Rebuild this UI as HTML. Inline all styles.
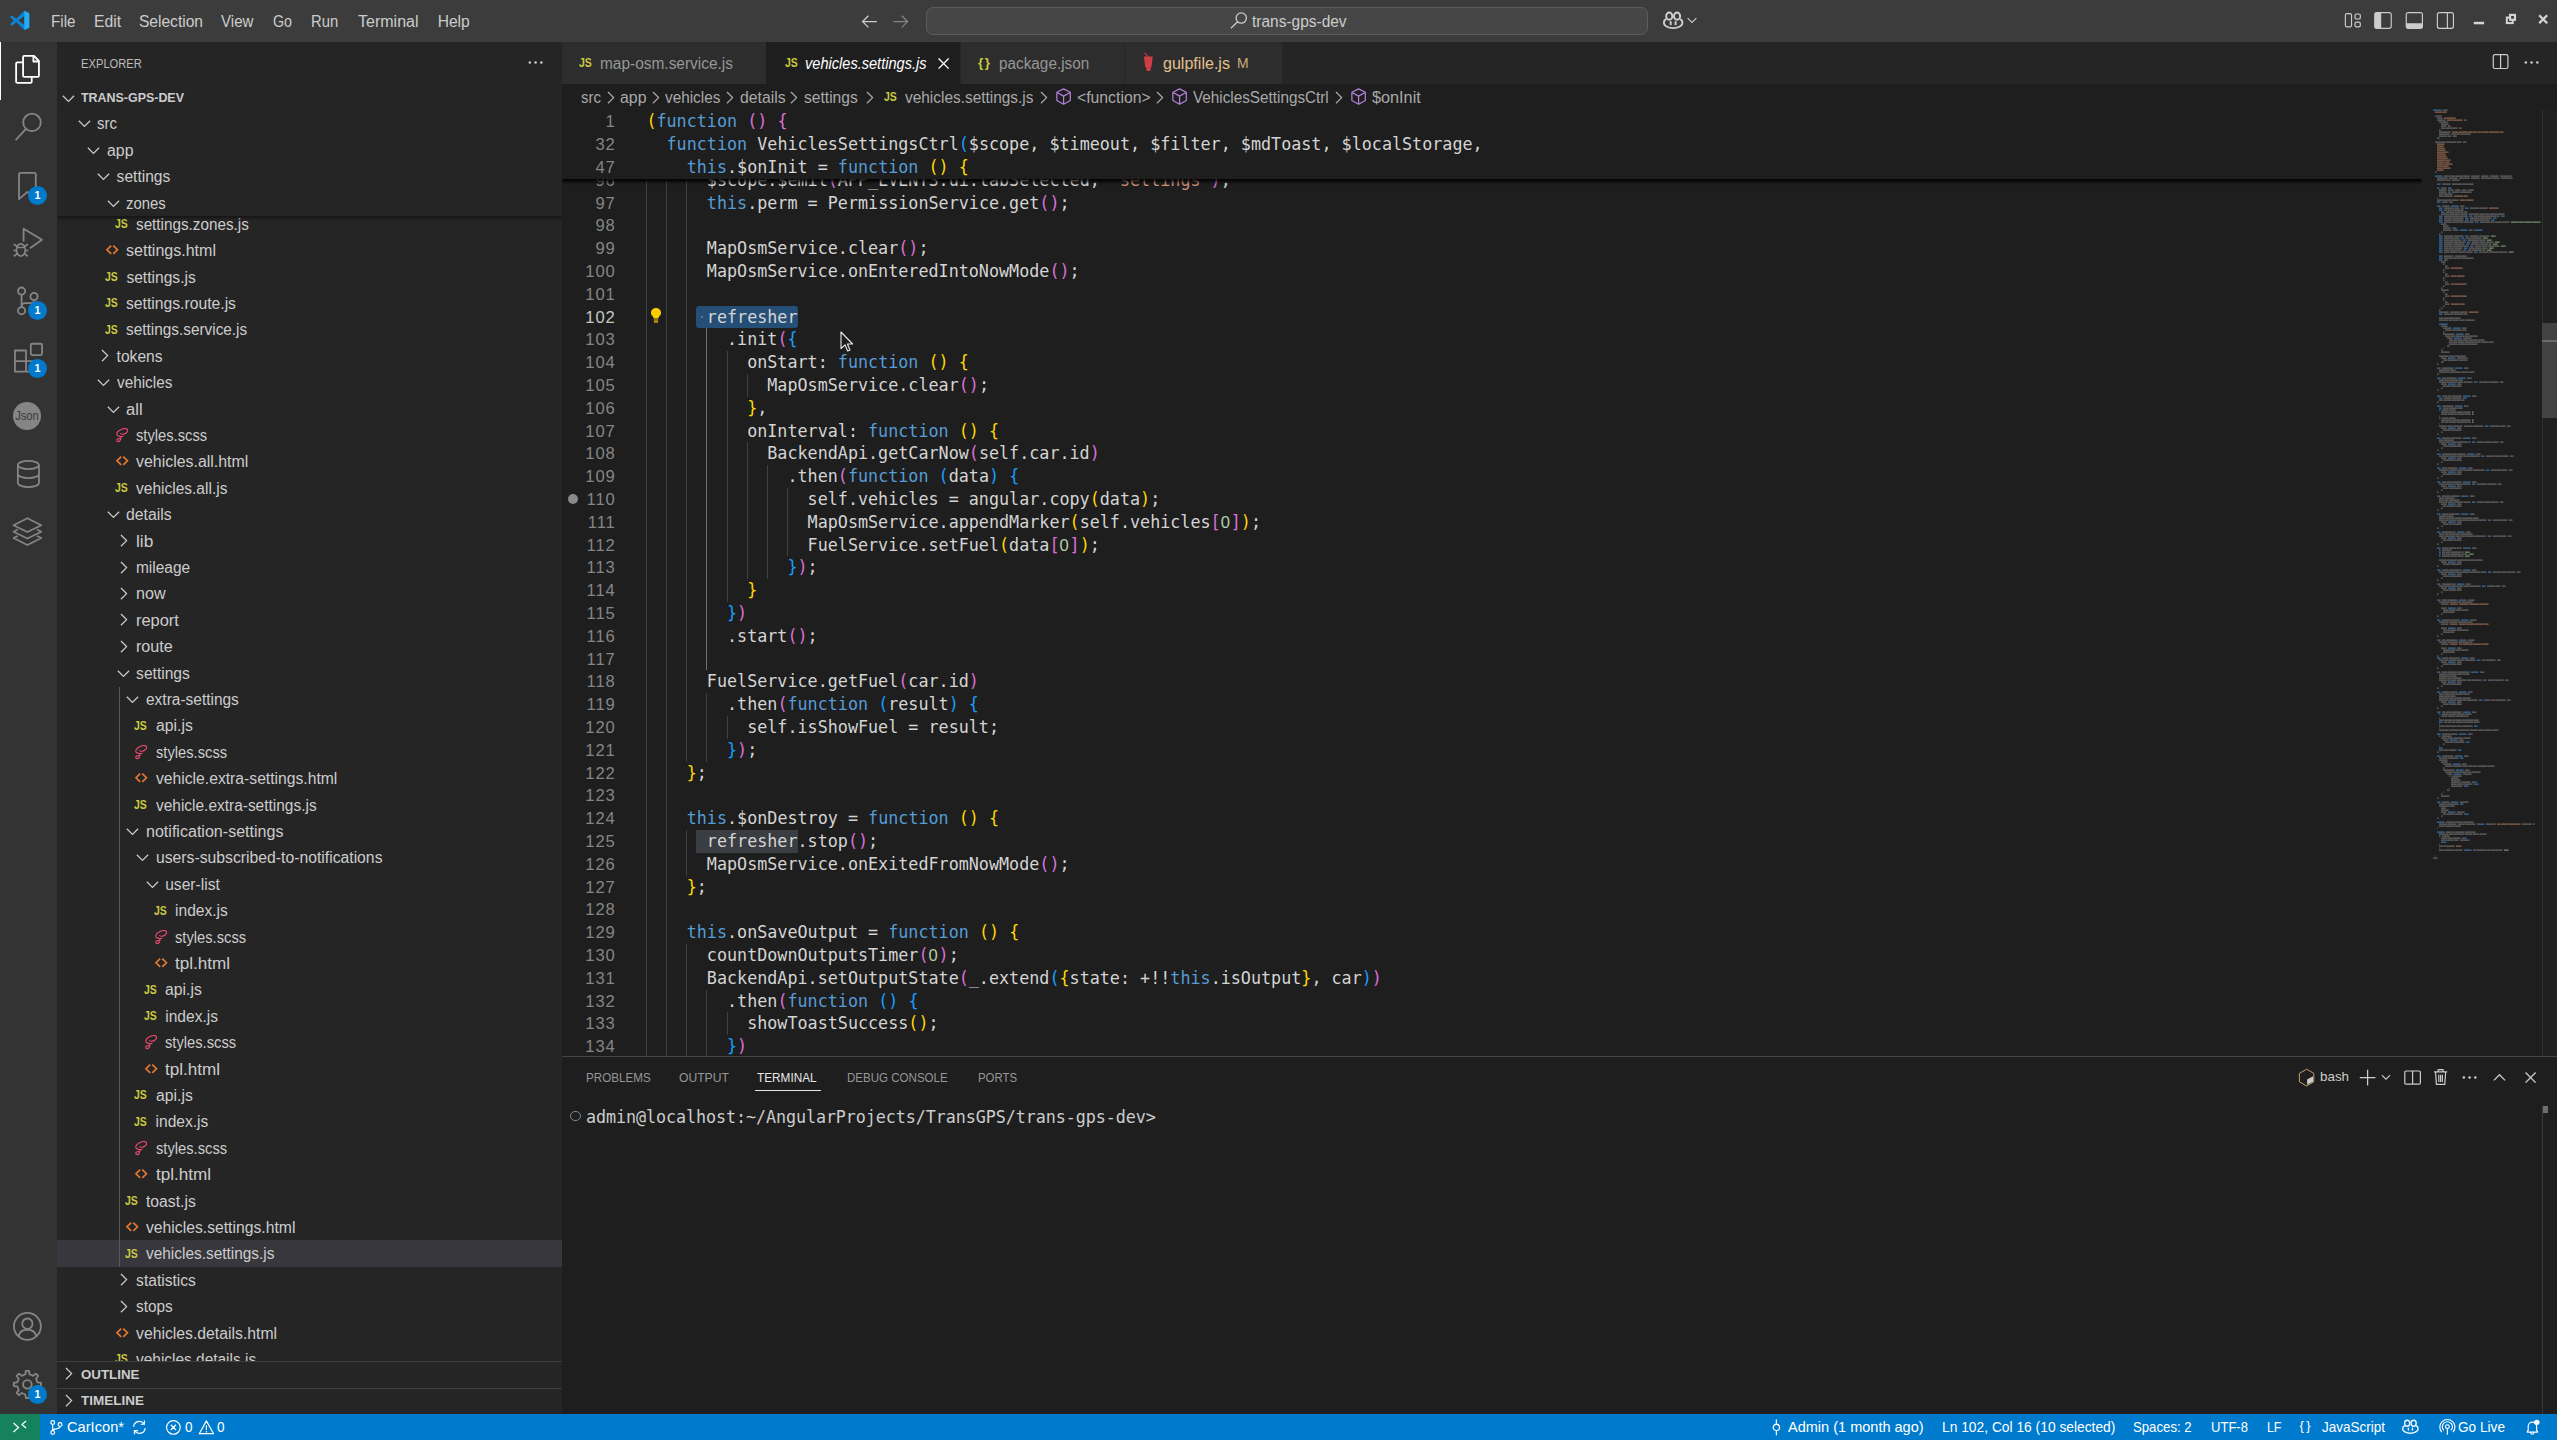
<!DOCTYPE html>
<html lang="en"><head><meta charset="utf-8"><title>vehicles.settings.js - trans-gps-dev - Visual Studio Code</title>
<style>
*{box-sizing:border-box;margin:0;padding:0}
html,body{width:2557px;height:1440px;overflow:hidden;background:#1e1e1e}
body{font-family:"Liberation Sans", "DejaVu Sans", sans-serif;font-size:15.6px;color:#cccccc;position:relative}
.abs{position:absolute}
.t{position:absolute;top:0;white-space:pre;transform-origin:0 50%}
.js{color:#cbcb41;font-size:12.8px;font-weight:bold;transform:scaleX(.82);letter-spacing:-0.2px}
svg{display:block;overflow:visible}
#titlebar{left:0;top:0;width:2557px;height:42px;background:#3c3c3c;line-height:43.6px;color:#cccccc}
#cmd{left:926px;top:7px;width:722px;height:28px;border:1px solid #5c5c5c;border-radius:7px;background:#464646}
#activity{left:0;top:42px;width:57px;height:1372px;background:#333333}
#sidebar{left:57px;top:42px;width:505px;height:1372px;background:#252526;overflow:hidden}
.row{position:absolute;left:0;width:505px;height:26.4px;line-height:28px;white-space:pre;color:#cccccc;font-size:15.6px}
.row svg{position:absolute}
.sel{background:#37373d}
.hdr{color:#cccccc;line-height:26.4px}
#editor{left:562px;top:42px;width:1995px;height:1014px;background:#1e1e1e;overflow:hidden}
#tabs{left:0;top:0;width:1995px;height:42px;background:#252526}
.tab{position:absolute;top:0;height:42px;line-height:43.6px;background:#2d2d2d;color:#969696;font-size:15.6px;white-space:pre}
.tab.active{background:#1e1e1e;color:#ffffff}
#crumbs{left:0;top:42px;width:1995px;height:26.4px;line-height:28px;color:#a9a9a9;font-size:15.6px;white-space:pre}
#crumbs svg{position:absolute}
.code{font-family:"DejaVu Sans Mono", "Liberation Mono", monospace;font-size:16.74px;white-space:pre;color:#d4d4d4}
.ln{position:absolute;left:0;width:1860px;height:22.8px;line-height:23.6px}
.ln .n{position:absolute;left:0;width:53.6px;text-align:right;color:#858585;font-family:"Liberation Sans",sans-serif;font-size:16.6px;letter-spacing:0.85px}
.ln .n.cur{color:#c6c6c6}
.ln .c{position:absolute;left:84.4px}
.k{color:#569cd6}.s{color:#ce9178}.nu{color:#b5cea8;font-family:"Liberation Sans",sans-serif;font-size:16.6px;letter-spacing:0.85px}
.b1{color:#ffd700}.b2{color:#da70d6}.b3{color:#179fff}
.g{position:absolute;width:1px;background:#404040}
.g.a{background:#707070}
#panel{left:562px;top:1056px;width:1995px;height:358px;background:#1e1e1e;border-top:1px solid #454545}
.ptab{position:absolute;top:8px;height:26px;line-height:26px;font-size:13.2px;color:#969696;white-space:pre}
.ptab.active{color:#e7e7e7}
#status{left:0;top:1414px;width:2557px;height:26px;background:#007acc;color:#ffffff;font-size:14.4px;line-height:26.6px;white-space:pre}
#status svg{position:absolute}
.badge{position:absolute;width:19px;height:19px;border-radius:10px;background:#007acc;color:#fff;font-size:10.8px;font-weight:bold;line-height:19px;text-align:center}
</style></head><body>

<div id="titlebar" class="abs">
<svg class="abs" style="left:9px;top:10px" width="21" height="21" viewBox="0 0 23 23" ><path d="M16.850 0.900L8 9.700L3.400 5.900L1 7.700L5.300 11.600L1 15.500L3.400 17.300L8 13.500L16.850 22L22.200 19.400V3.600z" fill="#0a84d6"/><path d="M16.850 0.900L22.200 3.600V19.400L16.850 22z" fill="#25adf3"/><path d="M16.500 6.850L10.300 11.600L16.500 16.100z" fill="#3c3c3c"/></svg>
<span class="t" style="left:50.9px;transform:scaleX(0.972);">File</span>
<span class="t" style="left:93.9px;transform:scaleX(1.010);">Edit</span>
<span class="t" style="left:138.9px;">Selection</span>
<span class="t" style="left:220.9px;transform:scaleX(0.968);">View</span>
<span class="t" style="left:272.7px;transform:scaleX(0.913);">Go</span>
<span class="t" style="left:311.4px;transform:scaleX(0.950);">Run</span>
<span class="t" style="left:357.9px;transform:scaleX(1.027);">Terminal</span>
<span class="t" style="left:437.7px;">Help</span>
<svg class="abs" style="left:860px;top:12px" width="19.2" height="19.2" viewBox="0 0 16 16" ><path d="M14 8H2.6M7 3.2L2.2 8L7 12.8" fill="none" stroke="#cccccc" stroke-width="1.1" /></svg>
<svg class="abs" style="left:891px;top:12px" width="19.2" height="19.2" viewBox="0 0 16 16" ><path d="M2 8H13.4M9 3.2L13.8 8L9 12.8" fill="none" stroke="#848484" stroke-width="1.1" /></svg>
<div id="cmd" class="abs"></div>
<svg class="abs" style="left:1229px;top:11px" width="19.2" height="19.2" viewBox="0 0 16 16" ><path d="M10.2 1.6a4.3 4.3 0 1 1 0 8.6a4.3 4.3 0 0 1 0-8.6zM7.1 9L1.6 14.4" fill="none" stroke="#cccccc" stroke-width="1.05" /></svg>
<span class="t" style="left:1252.0px;transform:scaleX(0.992);">trans-gps-dev</span>
<svg class="abs" style="left:1662.8px;top:11.25px" width="20.3" height="18.1" viewBox="0 0 20.3 18.1" opacity="1"><ellipse cx="6.250" cy="5.150" rx="3.100" ry="3.600" fill="none" stroke="#d0d0d0" stroke-width="1.9"/><ellipse cx="14.050" cy="5.150" rx="3.100" ry="3.600" fill="none" stroke="#d0d0d0" stroke-width="1.9"/><path d="M3.200 8.200C1.600 8.800 0.950 10 0.950 11.600V12.600C0.950 14.200 4.800 17.150 10.150 17.150C15.500 17.150 19.350 14.200 19.350 12.600V11.600C19.350 10 18.700 8.800 17.100 8.200" fill="none" stroke="#d0d0d0" stroke-width="1.9"/><path d="M7.700 11V13.400M12.600 11V13.400" stroke="#d0d0d0" stroke-width="1.9" stroke-linecap="round"/></svg>
<svg class="abs" style="left:1685.9px;top:14.2px" width="12" height="12" viewBox="0 0 16 16" ><path d="M2.2 5.4L8 11.2L13.8 5.4" fill="none" stroke="#cccccc" stroke-width="1.45" /></svg>
<svg class="abs" style="left:0;top:0" width="2557" height="42" viewBox="0 0 2557 42"><rect x="2345.38" y="13.57" width="6.15" height="13.25" rx="1.6" fill="none" stroke="#cccccc" stroke-width="1.15"/><rect x="2354.97" y="13.97" width="5.35" height="5.05" rx="1.6" fill="none" stroke="#cccccc" stroke-width="1.15"/><rect x="2354.97" y="22.18" width="5.35" height="4.65" rx="1.6" fill="none" stroke="#cccccc" stroke-width="1.15"/><rect x="2374.77" y="12.57" width="16.45" height="15.75" rx="2" fill="none" stroke="#cccccc" stroke-width="1.15"/><path d="M2376.200 12.600H2381.200V28.300H2376.200a1.400 1.400 0 0 1-1.400-1.400V14a1.400 1.400 0 0 1 1.400-1.400z" fill="#cccccc"/><rect x="2406.27" y="12.57" width="16.15" height="15.75" rx="2" fill="none" stroke="#cccccc" stroke-width="1.15"/><path d="M2406.300 23.200H2422.400V26.900a1.400 1.400 0 0 1-1.400 1.400H2407.700a1.400 1.400 0 0 1-1.400-1.400z" fill="#cccccc"/><rect x="2437.38" y="12.57" width="16.05" height="15.75" rx="2" fill="none" stroke="#cccccc" stroke-width="1.15"/><path d="M2447.400 12.600V28.300" stroke="#cccccc" stroke-width="1.15"/><rect x="2473.800" y="21.800" width="10.300" height="2.500" fill="#d4d4d4"/><rect x="2506.800" y="17.500" width="5.900" height="5.600" fill="none" stroke="#d4d4d4" stroke-width="2"/><rect x="2510.100" y="14.900" width="4.900" height="4.900" fill="#3c3c3c" stroke="#d4d4d4" stroke-width="2.100"/><path d="M2539.200 15.300L2547.200 23.300M2547.200 15.300L2539.200 23.300" stroke="#d4d4d4" stroke-width="2.300" fill="none"/></svg>
</div>
<div id="activity" class="abs">
<div class="abs" style="left:0;top:0;width:1.4px;height:57.6px;background:#ffffff"></div>
<svg class="abs" style="left:13px;top:13px" width="28.8" height="28.8" viewBox="0 0 24 24" ><path d="M17.500 0.800L21.600 5V17.200a1 1 0 0 1-1 1H9.400a1 1 0 0 1-1-1V1.800a1 1 0 0 1 1-1zM17 1V5.400H21.400M8.400 6.200H3.600a1 1 0 0 0-1 1V22.200a1 1 0 0 0 1 1H14.600a1 1 0 0 0 1-1V18.200" fill="none" stroke="#ffffff" stroke-width="1.5" stroke-linejoin="round"/></svg>
<svg class="abs" style="left:13.5px;top:70px" width="28.8" height="28.8" viewBox="0 0 24 24" ><path d="M15 1.400a7.300 7.300 0 1 1 0 14.600a7.300 7.300 0 0 1 0-14.600zM10 14L1.400 23.400" fill="none" stroke="#858585" stroke-width="1.5" /></svg>
<svg class="abs" style="left:13px;top:129px" width="28.8" height="28.8" viewBox="0 0 24 24" ><path d="M6.200 1.600h11.600a1.200 1.200 0 0 1 1.200 1.200V23.400L12 17.400L5 23.400V2.800a1.200 1.200 0 0 1 1.200-1.200z" fill="none" stroke="#858585" stroke-width="1.5" stroke-linejoin="round"/></svg>
<svg class="abs" style="left:13.5px;top:187.4px" width="28.8" height="28.8" viewBox="0 0 24 24" ><path d="M8 10.400V-0.200L23.300 9L13.300 16" fill="none" stroke="#858585" stroke-width="1.5" stroke-linejoin="round"/><path d="M5.700 12.400a3.700 5.100 0 0 1 0 10.200a3.700 5.100 0 0 1 0-10.200zM2.200 15.400H9.200M2.300 14.400L-0.200 12.600M2 17.900H-0.600M2.500 20.700L-0.200 22.700M9.100 14.400L11.600 12.600M9.400 17.900H12M8.900 20.700L11.600 22.700" fill="none" stroke="#858585" stroke-width="1.4" /></svg>
<svg class="abs" style="left:14px;top:244.8px" width="28.8" height="28.8" viewBox="0 0 24 24" ><path d="M6.300 0.400a3 3 0 1 1 0 6a3 3 0 0 1 0-6zM6.300 16.700a3 3 0 1 1 0 6a3 3 0 0 1 0-6zM16.700 4.900a3 3 0 1 1 0 6a3 3 0 0 1 0-6zM6.300 6.400V16.700M16.700 10.900V11.400Q16.700 13.400 14.700 13.400H9.300Q6.300 13.400 6.300 16.400" fill="none" stroke="#858585" stroke-width="1.5" /></svg>
<svg class="abs" style="left:13.5px;top:302px" width="28.8" height="28.8" viewBox="0 0 24 24" ><path d="M0.800 5.400h9.200v8.800h9.200v8.800H0.800zM0.800 14.200h9.200M10 14.200v8.800" fill="none" stroke="#858585" stroke-width="1.5" stroke-linejoin="round"/><rect x="14" y="-0.2" width="9.400" height="9.400" rx="1.2" fill="none" stroke="#858585" stroke-width="1.5"/></svg>
<div class="abs" style="left:12.8px;top:359.8px;width:28px;height:28px;border-radius:14px;background:#858585"></div><div class="abs" style="left:12.8px;top:359.8px;width:28px;height:28px;line-height:28px;text-align:center;font-size:13px;color:#3a3a3a;transform:scaleX(.86)">Json</div>
<svg class="abs" style="left:14px;top:416.6px" width="28.8" height="28.8" viewBox="0 0 24 24" ><path d="M3.200 5a8.800 3.400 0 0 1 17.600 0a8.800 3.400 0 0 1-17.600 0zM3.200 5V20a8.800 3.400 0 0 0 17.600 0V5M3.200 12.500a8.800 3.400 0 0 0 17.600 0" fill="none" stroke="#858585" stroke-width="1.5" /></svg>
<svg class="abs" style="left:13px;top:474.6px" width="28.8" height="28.8" viewBox="0 0 24 24" ><path d="M12 1L23.600 6.800L12 12.600L0.400 6.800zM4 10.400L0.400 12.200L12 18L23.600 12.200L20 10.400M4 15.800L0.400 17.600L12 23.400L23.600 17.600L20 15.800" fill="none" stroke="#858585" stroke-width="1.4" stroke-linejoin="round"/></svg>
<svg class="abs" style="left:13.2px;top:1270.4px" width="28.8" height="28.8" viewBox="0 0 24 24" ><path d="M12 0.800a11.200 11.200 0 1 1 0 22.400a11.200 11.200 0 0 1 0-22.400zM12 5.400a4.300 4.300 0 1 1 0 8.600a4.300 4.300 0 0 1 0-8.600zM4.600 20.400C5.400 16.400 8.600 14.800 12 14.800s6.600 1.600 7.400 5.600" fill="none" stroke="#858585" stroke-width="1.5" /></svg>
<svg class="abs" style="left:13.2px;top:1327.8px" width="28.8" height="28.8" viewBox="0 0 24 24" ><path d="M10.29 3.57L10.64 0.68L13.36 0.68L13.71 3.57L16.75 4.83L19.04 3.03L20.97 4.96L19.17 7.25L20.43 10.29L23.32 10.64L23.32 13.36L20.43 13.71L19.17 16.75L20.97 19.04L19.04 20.97L16.75 19.17L13.71 20.43L13.36 23.32L10.64 23.32L10.29 20.43L7.25 19.17L4.96 20.97L3.03 19.04L4.83 16.75L3.57 13.71L0.68 13.36L0.68 10.64L3.57 10.29L4.83 7.25L3.03 4.96L4.96 3.03L7.25 4.83z" fill="none" stroke="#858585" stroke-width="1.5" stroke-linejoin="round"/><path d="M12 8.400a3.600 3.600 0 1 1 0 7.200a3.600 3.600 0 0 1 0-7.200z" fill="none" stroke="#858585" stroke-width="1.5" /></svg>
<div class="badge" style="left:28px;top:144px">1</div>
<div class="badge" style="left:28px;top:259px">1</div>
<div class="badge" style="left:28px;top:317px">1</div>
<div class="badge" style="left:28px;top:1342.8px">1</div>
</div>
<div id="sidebar" class="abs">
<div class="abs" style="left:0;top:174px;width:505px;height:1145px;overflow:hidden">
<div class="row" style="top:-5.2px"><span class="t js" style="left:57.9px;top:-0.6px">JS</span><span class="t" style="left:79.1px;transform:scaleX(0.979);">settings.zones.js</span></div>
<div class="row" style="top:21.2px"><svg class="abs" style="left:49.16000000000001px;top:7.95px" width="13" height="10" viewBox="0 0 13 10" ><path d="M5.200 0.700L1 4.750L5.200 8.800M7.250 0.700L11.450 4.750L7.250 8.800" fill="none" stroke="#e37933" stroke-width="1.7" /></svg><span class="t" style="left:69.4px;transform:scaleX(1.028);">settings.html</span></div>
<div class="row" style="top:47.6px"><span class="t js" style="left:48.2px;top:-0.6px">JS</span><span class="t" style="left:69.4px;">settings.js</span></div>
<div class="row" style="top:74.0px"><span class="t js" style="left:48.2px;top:-0.6px">JS</span><span class="t" style="left:69.4px;transform:scaleX(1.007);">settings.route.js</span></div>
<div class="row" style="top:100.4px"><span class="t js" style="left:48.2px;top:-0.6px">JS</span><span class="t" style="left:69.4px;transform:scaleX(0.985);">settings.service.js</span></div>
<div class="row" style="top:126.8px"><svg class="abs" style="left:37.839999999999996px;top:3.7px" width="19.2" height="19.2" viewBox="0 0 16 16" ><path d="M5.8 3.3L10.5 8L5.8 12.7" fill="none" stroke="#cccccc" stroke-width="1.05" /></svg><span class="t" style="left:59.6px;">tokens</span></div>
<div class="row" style="top:153.2px"><svg class="abs" style="left:37.14px;top:4.0px" width="19.2" height="19.2" viewBox="0 0 16 16" ><path d="M3.2 5.6L7.9 10.3L12.6 5.6" fill="none" stroke="#cccccc" stroke-width="1.05" /></svg><span class="t" style="left:59.6px;transform:scaleX(0.982);">vehicles</span></div>
<div class="row" style="top:179.6px"><svg class="abs" style="left:46.860000000000014px;top:4.0px" width="19.2" height="19.2" viewBox="0 0 16 16" ><path d="M3.2 5.6L7.9 10.3L12.6 5.6" fill="none" stroke="#cccccc" stroke-width="1.05" /></svg><span class="t" style="left:69.4px;transform:scaleX(1.063);">all</span></div>
<div class="row" style="top:206.0px"><svg class="abs" style="left:58.98000000000001px;top:6.1px" width="13" height="14" viewBox="0 0 13 14" ><path d="M4.600 5.600C6.500 7 11 5.800 11.600 2.800C12 0.600 8.600-0.200 5.600 1.200C2.600 2.600 0.200 5 1 7C1.600 8.400 3.600 8.200 4.800 8.600L7 8.300M4.800 8.600C5.400 9.600 5 11.400 4 12.600C3 13.900 1.200 14 0.800 12.600C0.400 11.200 2.200 10.200 4 10.800" fill="none" stroke="#ec4a73" stroke-width="1.15" stroke-linecap="round" stroke-linejoin="round"/></svg><span class="t" style="left:79.1px;transform:scaleX(0.943);">styles.scss</span></div>
<div class="row" style="top:232.4px"><svg class="abs" style="left:58.88000000000001px;top:7.95px" width="13" height="10" viewBox="0 0 13 10" ><path d="M5.200 0.700L1 4.750L5.200 8.800M7.250 0.700L11.450 4.750L7.250 8.800" fill="none" stroke="#e37933" stroke-width="1.7" /></svg><span class="t" style="left:79.1px;transform:scaleX(1.020);">vehicles.all.html</span></div>
<div class="row" style="top:258.8px"><span class="t js" style="left:57.9px;top:-0.6px">JS</span><span class="t" style="left:79.1px;transform:scaleX(0.995);">vehicles.all.js</span></div>
<div class="row" style="top:285.2px"><svg class="abs" style="left:46.860000000000014px;top:4.0px" width="19.2" height="19.2" viewBox="0 0 16 16" ><path d="M3.2 5.6L7.9 10.3L12.6 5.6" fill="none" stroke="#cccccc" stroke-width="1.05" /></svg><span class="t" style="left:69.4px;transform:scaleX(1.011);">details</span></div>
<div class="row" style="top:311.6px"><svg class="abs" style="left:57.28000000000001px;top:3.7px" width="19.2" height="19.2" viewBox="0 0 16 16" ><path d="M5.8 3.3L10.5 8L5.8 12.7" fill="none" stroke="#cccccc" stroke-width="1.05" /></svg><span class="t" style="left:79.1px;transform:scaleX(1.107);">lib</span></div>
<div class="row" style="top:338.0px"><svg class="abs" style="left:57.28000000000001px;top:3.7px" width="19.2" height="19.2" viewBox="0 0 16 16" ><path d="M5.8 3.3L10.5 8L5.8 12.7" fill="none" stroke="#cccccc" stroke-width="1.05" /></svg><span class="t" style="left:79.1px;transform:scaleX(0.991);">mileage</span></div>
<div class="row" style="top:364.4px"><svg class="abs" style="left:57.28000000000001px;top:3.7px" width="19.2" height="19.2" viewBox="0 0 16 16" ><path d="M5.8 3.3L10.5 8L5.8 12.7" fill="none" stroke="#cccccc" stroke-width="1.05" /></svg><span class="t" style="left:79.1px;transform:scaleX(1.033);">now</span></div>
<div class="row" style="top:390.8px"><svg class="abs" style="left:57.28000000000001px;top:3.7px" width="19.2" height="19.2" viewBox="0 0 16 16" ><path d="M5.8 3.3L10.5 8L5.8 12.7" fill="none" stroke="#cccccc" stroke-width="1.05" /></svg><span class="t" style="left:79.1px;transform:scaleX(1.052);">report</span></div>
<div class="row" style="top:417.2px"><svg class="abs" style="left:57.28000000000001px;top:3.7px" width="19.2" height="19.2" viewBox="0 0 16 16" ><path d="M5.8 3.3L10.5 8L5.8 12.7" fill="none" stroke="#cccccc" stroke-width="1.05" /></svg><span class="t" style="left:79.1px;transform:scaleX(1.034);">route</span></div>
<div class="row" style="top:443.6px"><svg class="abs" style="left:56.58000000000001px;top:4.0px" width="19.2" height="19.2" viewBox="0 0 16 16" ><path d="M3.2 5.6L7.9 10.3L12.6 5.6" fill="none" stroke="#cccccc" stroke-width="1.05" /></svg><span class="t" style="left:79.1px;">settings</span></div>
<div class="row" style="top:470.0px"><svg class="abs" style="left:66.30000000000001px;top:4.0px" width="19.2" height="19.2" viewBox="0 0 16 16" ><path d="M3.2 5.6L7.9 10.3L12.6 5.6" fill="none" stroke="#cccccc" stroke-width="1.05" /></svg><span class="t" style="left:88.8px;transform:scaleX(0.992);">extra-settings</span></div>
<div class="row" style="top:496.4px"><span class="t js" style="left:77.3px;top:-0.6px">JS</span><span class="t" style="left:98.5px;transform:scaleX(1.011);">api.js</span></div>
<div class="row" style="top:522.8px"><svg class="abs" style="left:78.42000000000002px;top:6.1px" width="13" height="14" viewBox="0 0 13 14" ><path d="M4.600 5.600C6.500 7 11 5.800 11.600 2.800C12 0.600 8.600-0.200 5.600 1.200C2.600 2.600 0.200 5 1 7C1.600 8.400 3.600 8.200 4.800 8.600L7 8.300M4.800 8.600C5.400 9.600 5 11.400 4 12.600C3 13.900 1.200 14 0.800 12.600C0.400 11.200 2.200 10.200 4 10.800" fill="none" stroke="#ec4a73" stroke-width="1.15" stroke-linecap="round" stroke-linejoin="round"/></svg><span class="t" style="left:98.5px;transform:scaleX(0.943);">styles.scss</span></div>
<div class="row" style="top:549.2px"><svg class="abs" style="left:78.32000000000001px;top:7.95px" width="13" height="10" viewBox="0 0 13 10" ><path d="M5.200 0.700L1 4.750L5.200 8.800M7.250 0.700L11.450 4.750L7.250 8.800" fill="none" stroke="#e37933" stroke-width="1.7" /></svg><span class="t" style="left:98.5px;transform:scaleX(1.006);">vehicle.extra-settings.html</span></div>
<div class="row" style="top:575.6px"><span class="t js" style="left:77.3px;top:-0.6px">JS</span><span class="t" style="left:98.5px;transform:scaleX(0.991);">vehicle.extra-settings.js</span></div>
<div class="row" style="top:602.0px"><svg class="abs" style="left:66.30000000000001px;top:4.0px" width="19.2" height="19.2" viewBox="0 0 16 16" ><path d="M3.2 5.6L7.9 10.3L12.6 5.6" fill="none" stroke="#cccccc" stroke-width="1.05" /></svg><span class="t" style="left:88.8px;transform:scaleX(1.030);">notification-settings</span></div>
<div class="row" style="top:628.4px"><svg class="abs" style="left:76.02000000000001px;top:4.0px" width="19.2" height="19.2" viewBox="0 0 16 16" ><path d="M3.2 5.6L7.9 10.3L12.6 5.6" fill="none" stroke="#cccccc" stroke-width="1.05" /></svg><span class="t" style="left:98.5px;transform:scaleX(1.009);">users-subscribed-to-notifications</span></div>
<div class="row" style="top:654.8px"><svg class="abs" style="left:85.74000000000001px;top:4.0px" width="19.2" height="19.2" viewBox="0 0 16 16" ><path d="M3.2 5.6L7.9 10.3L12.6 5.6" fill="none" stroke="#cccccc" stroke-width="1.05" /></svg><span class="t" style="left:108.2px;">user-list</span></div>
<div class="row" style="top:681.2px"><span class="t js" style="left:96.8px;top:-0.6px">JS</span><span class="t" style="left:118.0px;">index.js</span></div>
<div class="row" style="top:707.6px"><svg class="abs" style="left:97.86000000000001px;top:6.1px" width="13" height="14" viewBox="0 0 13 14" ><path d="M4.600 5.600C6.500 7 11 5.800 11.600 2.800C12 0.600 8.600-0.200 5.600 1.200C2.600 2.600 0.200 5 1 7C1.600 8.400 3.600 8.200 4.800 8.600L7 8.300M4.800 8.600C5.400 9.600 5 11.400 4 12.600C3 13.900 1.200 14 0.800 12.600C0.400 11.200 2.200 10.200 4 10.800" fill="none" stroke="#ec4a73" stroke-width="1.15" stroke-linecap="round" stroke-linejoin="round"/></svg><span class="t" style="left:118.0px;transform:scaleX(0.943);">styles.scss</span></div>
<div class="row" style="top:734.0px"><svg class="abs" style="left:97.76px;top:7.95px" width="13" height="10" viewBox="0 0 13 10" ><path d="M5.200 0.700L1 4.750L5.200 8.800M7.250 0.700L11.450 4.750L7.250 8.800" fill="none" stroke="#e37933" stroke-width="1.7" /></svg><span class="t" style="left:118.0px;transform:scaleX(1.096);">tpl.html</span></div>
<div class="row" style="top:760.4px"><span class="t js" style="left:87.0px;top:-0.6px">JS</span><span class="t" style="left:108.2px;transform:scaleX(1.011);">api.js</span></div>
<div class="row" style="top:786.8px"><span class="t js" style="left:87.0px;top:-0.6px">JS</span><span class="t" style="left:108.2px;">index.js</span></div>
<div class="row" style="top:813.2px"><svg class="abs" style="left:88.14000000000001px;top:6.1px" width="13" height="14" viewBox="0 0 13 14" ><path d="M4.600 5.600C6.500 7 11 5.800 11.600 2.800C12 0.600 8.600-0.200 5.600 1.200C2.600 2.600 0.200 5 1 7C1.600 8.400 3.600 8.200 4.800 8.600L7 8.300M4.800 8.600C5.400 9.600 5 11.400 4 12.600C3 13.900 1.200 14 0.800 12.600C0.400 11.200 2.200 10.200 4 10.800" fill="none" stroke="#ec4a73" stroke-width="1.15" stroke-linecap="round" stroke-linejoin="round"/></svg><span class="t" style="left:108.2px;transform:scaleX(0.943);">styles.scss</span></div>
<div class="row" style="top:839.6px"><svg class="abs" style="left:88.04px;top:7.95px" width="13" height="10" viewBox="0 0 13 10" ><path d="M5.200 0.700L1 4.750L5.200 8.800M7.250 0.700L11.450 4.750L7.250 8.800" fill="none" stroke="#e37933" stroke-width="1.7" /></svg><span class="t" style="left:108.2px;transform:scaleX(1.096);">tpl.html</span></div>
<div class="row" style="top:866.0px"><span class="t js" style="left:77.3px;top:-0.6px">JS</span><span class="t" style="left:98.5px;transform:scaleX(1.011);">api.js</span></div>
<div class="row" style="top:892.4px"><span class="t js" style="left:77.3px;top:-0.6px">JS</span><span class="t" style="left:98.5px;">index.js</span></div>
<div class="row" style="top:918.8px"><svg class="abs" style="left:78.42000000000002px;top:6.1px" width="13" height="14" viewBox="0 0 13 14" ><path d="M4.600 5.600C6.500 7 11 5.800 11.600 2.800C12 0.600 8.600-0.200 5.600 1.200C2.600 2.600 0.200 5 1 7C1.600 8.400 3.600 8.200 4.800 8.600L7 8.300M4.800 8.600C5.400 9.600 5 11.400 4 12.600C3 13.900 1.200 14 0.800 12.600C0.400 11.200 2.200 10.200 4 10.800" fill="none" stroke="#ec4a73" stroke-width="1.15" stroke-linecap="round" stroke-linejoin="round"/></svg><span class="t" style="left:98.5px;transform:scaleX(0.943);">styles.scss</span></div>
<div class="row" style="top:945.2px"><svg class="abs" style="left:78.32000000000001px;top:7.95px" width="13" height="10" viewBox="0 0 13 10" ><path d="M5.200 0.700L1 4.750L5.200 8.800M7.250 0.700L11.450 4.750L7.250 8.800" fill="none" stroke="#e37933" stroke-width="1.7" /></svg><span class="t" style="left:98.5px;transform:scaleX(1.096);">tpl.html</span></div>
<div class="row" style="top:971.6px"><span class="t js" style="left:67.6px;top:-0.6px">JS</span><span class="t" style="left:88.8px;transform:scaleX(1.009);">toast.js</span></div>
<div class="row" style="top:998.0px"><svg class="abs" style="left:68.60000000000001px;top:7.95px" width="13" height="10" viewBox="0 0 13 10" ><path d="M5.200 0.700L1 4.750L5.200 8.800M7.250 0.700L11.450 4.750L7.250 8.800" fill="none" stroke="#e37933" stroke-width="1.7" /></svg><span class="t" style="left:88.8px;transform:scaleX(1.008);">vehicles.settings.html</span></div>
<div class="row sel" style="top:1024.4px"><span class="t js" style="left:67.6px;top:-0.6px">JS</span><span class="t" style="left:88.8px;transform:scaleX(0.988);">vehicles.settings.js</span></div>
<div class="row" style="top:1050.8px"><svg class="abs" style="left:57.28000000000001px;top:3.7px" width="19.2" height="19.2" viewBox="0 0 16 16" ><path d="M5.8 3.3L10.5 8L5.8 12.7" fill="none" stroke="#cccccc" stroke-width="1.05" /></svg><span class="t" style="left:79.1px;">statistics</span></div>
<div class="row" style="top:1077.2px"><svg class="abs" style="left:57.28000000000001px;top:3.7px" width="19.2" height="19.2" viewBox="0 0 16 16" ><path d="M5.8 3.3L10.5 8L5.8 12.7" fill="none" stroke="#cccccc" stroke-width="1.05" /></svg><span class="t" style="left:79.1px;transform:scaleX(0.985);">stops</span></div>
<div class="row" style="top:1103.6px"><svg class="abs" style="left:58.88000000000001px;top:7.95px" width="13" height="10" viewBox="0 0 13 10" ><path d="M5.200 0.700L1 4.750L5.200 8.800M7.250 0.700L11.450 4.750L7.250 8.800" fill="none" stroke="#e37933" stroke-width="1.7" /></svg><span class="t" style="left:79.1px;transform:scaleX(1.011);">vehicles.details.html</span></div>
<div class="row" style="top:1130.0px"><span class="t js" style="left:57.9px;top:-0.6px">JS</span><span class="t" style="left:79.1px;transform:scaleX(0.990);">vehicles.details.js</span></div>
<div class="abs" style="left:62px;top:471px;width:1px;height:580px;background:#585858"></div>
</div>
<div class="abs" style="left:0;top:68.4px;width:505px;height:105.6px;background:#252526;box-shadow:0 2px 3px rgba(0,0,0,0.45)">
<div class="row" style="top:0.0px"><svg class="abs" style="left:17.700000000000003px;top:4.0px" width="19.2" height="19.2" viewBox="0 0 16 16" ><path d="M3.2 5.6L7.9 10.3L12.6 5.6" fill="none" stroke="#cccccc" stroke-width="1.05" /></svg><span class="t" style="left:40.2px;transform:scaleX(0.957);">src</span></div>
<div class="row" style="top:26.4px"><svg class="abs" style="left:27.42px;top:4.0px" width="19.2" height="19.2" viewBox="0 0 16 16" ><path d="M3.2 5.6L7.9 10.3L12.6 5.6" fill="none" stroke="#cccccc" stroke-width="1.05" /></svg><span class="t" style="left:49.9px;transform:scaleX(1.017);">app</span></div>
<div class="row" style="top:52.8px"><svg class="abs" style="left:37.14px;top:4.0px" width="19.2" height="19.2" viewBox="0 0 16 16" ><path d="M3.2 5.6L7.9 10.3L12.6 5.6" fill="none" stroke="#cccccc" stroke-width="1.05" /></svg><span class="t" style="left:59.6px;">settings</span></div>
<div class="row" style="top:79.2px"><svg class="abs" style="left:46.860000000000014px;top:4.0px" width="19.2" height="19.2" viewBox="0 0 16 16" ><path d="M3.2 5.6L7.9 10.3L12.6 5.6" fill="none" stroke="#cccccc" stroke-width="1.05" /></svg><span class="t" style="left:69.4px;transform:scaleX(0.953);">zones</span></div>
</div>
<div class="abs" style="left:0;top:0;width:505px;height:42px;line-height:43px;color:#bbbbbb"><span class="t" style="left:24.0px;font-size:13.2px;transform:scaleX(0.848);">EXPLORER</span></div>
<svg class="abs" style="left:468.6px;top:11px" width="19.2" height="19.2" viewBox="0 0 16 16" ><circle cx="3.2" cy="8" r="1.05" fill="#cccccc"/><circle cx="8" cy="8" r="1.05" fill="#cccccc"/><circle cx="12.8" cy="8" r="1.05" fill="#cccccc"/></svg>
<div class="row hdr" style="top:42px;line-height:27.6px"><svg class="abs" style="left:2.3000000000000007px;top:4.6px" width="19.2" height="19.2" viewBox="0 0 16 16" ><path d="M3.2 5.6L7.9 10.3L12.6 5.6" fill="none" stroke="#cccccc" stroke-width="1.05" /></svg><span class="t" style="left:24.0px;font-size:13.2px;font-weight:bold;transform:scaleX(0.943);">TRANS-GPS-DEV</span></div>
<div class="abs" style="left:0;top:1319px;width:505px;height:1px;background:#3f3f40"></div>
<div class="row hdr" style="top:1320px"><svg class="abs" style="left:2.0px;top:2.3000000000000003px" width="19.2" height="19.2" viewBox="0 0 16 16" ><path d="M5.8 3.3L10.5 8L5.8 12.7" fill="none" stroke="#cccccc" stroke-width="1.05" /></svg><span class="t" style="left:24.0px;font-size:13.2px;font-weight:bold;transform:scaleX(1.009);">OUTLINE</span></div>
<div class="abs" style="left:0;top:1345.6px;width:505px;height:1px;background:#3f3f40"></div>
<div class="row hdr" style="top:1346.4px"><svg class="abs" style="left:2.0px;top:2.3000000000000003px" width="19.2" height="19.2" viewBox="0 0 16 16" ><path d="M5.8 3.3L10.5 8L5.8 12.7" fill="none" stroke="#cccccc" stroke-width="1.05" /></svg><span class="t" style="left:24.0px;font-size:13.2px;font-weight:bold;transform:scaleX(1.022);">TIMELINE</span></div>
</div>
<div id="editor" class="abs">
<div id="tabs" class="abs">
<div class="tab" style="left:0;width:204px"><span class="t js" style="left:16.6px;top:-0.8px">JS</span><span class="t" style="left:38.0px;transform:scaleX(0.990);">map-osm.service.js</span></div>
<div class="tab active" style="left:204px;width:194px"><span class="t js" style="left:18.6px;top:-0.8px">JS</span><span class="t" style="left:39.1px;font-style:italic;transform:scaleX(0.935);">vehicles.settings.js</span><svg class="abs" style="left:167.9px;top:11.6px" width="19.2" height="19.2" viewBox="0 0 16 16" ><path d="M3.8 3.8L12.2 12.2M12.2 3.8L3.8 12.2" fill="none" stroke="#ffffff" stroke-width="1.15" /></svg></div>
<div class="tab" style="left:399px;width:163px"><span class="t" style="left:17px;color:#cbcb41;font-size:13.5px;font-weight:bold;letter-spacing:1.6px;top:-1.5px">{}</span><span class="t" style="left:37.5px;transform:scaleX(0.982);">package.json</span></div>
<div class="tab" style="left:563px;width:157px;color:#e2c08d"><svg class="abs" style="left:19.40000000000009px;top:11.259999999999998px" width="9" height="18" viewBox="0 0 9 18" ><path d="M0 3.600H8.640V5L7.500 13.900H6.900L6.300 17.900H2.800L2 13.900H1.250L0.100 5z" fill="#cc3e44"/><path d="M3.900 3.800L2.500 1.500L0.700 0.300" fill="none" stroke="#cc3e44" stroke-width="1.050" stroke-linecap="round"/></svg><span class="t" style="left:38.0px;transform:scaleX(1.030);">gulpfile.js</span><span class="t" style="left:111.6px;font-size:14.4px;transform:scaleX(0.967);opacity:.85;">M</span></div>
<svg class="abs" style="left:1929.1px;top:9.9px" width="19.2" height="19.2" viewBox="0 0 16 16" ><path d="M3.1 2.25h9.8a1.2 1.2 0 0 1 1.2 1.2v9.100a1.2 1.2 0 0 1-1.2 1.2h-9.8a1.2 1.2 0 0 1-1.2-1.2v-9.100a1.2 1.2 0 0 1 1.2-1.2zM8 2.25v11.5" fill="none" stroke="#cccccc" stroke-width="1" /></svg>
<svg class="abs" style="left:1960px;top:11px" width="19.2" height="19.2" viewBox="0 0 16 16" ><circle cx="3.2" cy="8" r="1.05" fill="#cccccc"/><circle cx="8" cy="8" r="1.05" fill="#cccccc"/><circle cx="12.8" cy="8" r="1.05" fill="#cccccc"/></svg>
</div>
<div id="crumbs" class="abs">
<span class="t" style="left:19.0px;transform:scaleX(0.957);">src</span>
<svg class="abs" style="left:38.9px;top:3.5px" width="19.2" height="19.2" viewBox="0 0 16 16" ><path d="M5.8 3.3L10.5 8L5.8 12.7" fill="none" stroke="#a9a9a9" stroke-width="1.05" /></svg>
<span class="t" style="left:58.0px;transform:scaleX(1.017);">app</span>
<svg class="abs" style="left:83.9px;top:3.5px" width="19.2" height="19.2" viewBox="0 0 16 16" ><path d="M5.8 3.3L10.5 8L5.8 12.7" fill="none" stroke="#a9a9a9" stroke-width="1.05" /></svg>
<span class="t" style="left:103.0px;transform:scaleX(0.982);">vehicles</span>
<svg class="abs" style="left:158.4px;top:3.5px" width="19.2" height="19.2" viewBox="0 0 16 16" ><path d="M5.8 3.3L10.5 8L5.8 12.7" fill="none" stroke="#a9a9a9" stroke-width="1.05" /></svg>
<span class="t" style="left:178.0px;transform:scaleX(1.011);">details</span>
<svg class="abs" style="left:222.4px;top:3.5px" width="19.2" height="19.2" viewBox="0 0 16 16" ><path d="M5.8 3.3L10.5 8L5.8 12.7" fill="none" stroke="#a9a9a9" stroke-width="1.05" /></svg>
<span class="t" style="left:242.0px;">settings</span>
<svg class="abs" style="left:297.9px;top:3.5px" width="19.2" height="19.2" viewBox="0 0 16 16" ><path d="M5.8 3.3L10.5 8L5.8 12.7" fill="none" stroke="#a9a9a9" stroke-width="1.05" /></svg>
<span class="t js" style="left:321.5px;top:-0.8px">JS</span>
<span class="t" style="left:343.0px;transform:scaleX(0.988);">vehicles.settings.js</span>
<svg class="abs" style="left:472.4px;top:3.5px" width="19.2" height="19.2" viewBox="0 0 16 16" ><path d="M5.8 3.3L10.5 8L5.8 12.7" fill="none" stroke="#a9a9a9" stroke-width="1.05" /></svg>
<svg class="abs" style="left:492.4px;top:3.4px" width="19.2" height="19.2" viewBox="0 0 16 16" ><path d="M8 1.6L13.6 4.4V11.2L8 14.4L2.4 11.2V4.4zM2.6 4.6L8 7.6L13.4 4.6M8 7.6V14.2" fill="none" stroke="#b180d7" stroke-width="1.05" stroke-linejoin="round"/></svg>
<span class="t" style="left:514.5px;transform:scaleX(1.011);">&lt;function&gt;</span>
<svg class="abs" style="left:587.9px;top:3.5px" width="19.2" height="19.2" viewBox="0 0 16 16" ><path d="M5.8 3.3L10.5 8L5.8 12.7" fill="none" stroke="#a9a9a9" stroke-width="1.05" /></svg>
<svg class="abs" style="left:608.4px;top:3.4px" width="19.2" height="19.2" viewBox="0 0 16 16" ><path d="M8 1.6L13.6 4.4V11.2L8 14.4L2.4 11.2V4.4zM2.6 4.6L8 7.6L13.4 4.6M8 7.6V14.2" fill="none" stroke="#b180d7" stroke-width="1.05" stroke-linejoin="round"/></svg>
<span class="t" style="left:630.5px;transform:scaleX(0.979);">VehiclesSettingsCtrl</span>
<svg class="abs" style="left:767.4px;top:3.5px" width="19.2" height="19.2" viewBox="0 0 16 16" ><path d="M5.8 3.3L10.5 8L5.8 12.7" fill="none" stroke="#a9a9a9" stroke-width="1.05" /></svg>
<svg class="abs" style="left:787.4px;top:3.4px" width="19.2" height="19.2" viewBox="0 0 16 16" ><path d="M8 1.6L13.6 4.4V11.2L8 14.4L2.4 11.2V4.4zM2.6 4.6L8 7.6L13.4 4.6M8 7.6V14.2" fill="none" stroke="#b180d7" stroke-width="1.05" stroke-linejoin="round"/></svg>
<span class="t" style="left:809.5px;transform:scaleX(1.042);">$onInit</span>
</div>
<div class="abs code" style="left:0;top:68.4px;width:1860px;height:945.6px;overflow:hidden">
<div class="g" style="left:84px;top:58.4px;height:889.2px"></div>
<div class="g" style="left:104px;top:58.4px;height:889.2px"></div>
<div class="g" style="left:124px;top:58.4px;height:592.8px"></div>
<div class="g" style="left:124px;top:719.6px;height:45.6px"></div>
<div class="g" style="left:124px;top:833.6px;height:114.0px"></div>
<div class="g a" style="left:144px;top:218.0px;height:342.0px"></div>
<div class="g" style="left:144px;top:582.8px;height:68.4px"></div>
<div class="g" style="left:144px;top:879.2px;height:68.4px"></div>
<div class="g" style="left:165px;top:240.8px;height:250.8px"></div>
<div class="g" style="left:165px;top:605.6px;height:22.8px"></div>
<div class="g" style="left:165px;top:902.0px;height:22.8px"></div>
<div class="g" style="left:185px;top:263.6px;height:22.8px"></div>
<div class="g" style="left:185px;top:332.0px;height:136.8px"></div>
<div class="g" style="left:205px;top:354.8px;height:114.0px"></div>
<div class="g" style="left:225px;top:377.6px;height:68.4px"></div>
<div class="abs" style="left:134.3px;top:195.2px;width:101.8px;height:22.8px;background:#264f78;border-radius:3px"></div>
<div class="abs" style="left:138.8px;top:205.7px;width:2px;height:2px;background:#5a7fa4;border-radius:1px"></div>
<div class="abs" style="left:134.3px;top:719.6px;width:101.8px;height:22.8px;background:#3a3d41"></div>
<div class="ln" style="top:58.4px"><span class="n">96</span><span class="c">      $scope.$emit<span class="b2">(</span>APP_EVENTS.ui.tabSelected, <span class="s">'settings'</span><span class="b2">)</span>;</span></div>
<div class="ln" style="top:81.2px"><span class="n">97</span><span class="c">      <span class="k">this</span>.perm = PermissionService.get<span class="b2">()</span>;</span></div>
<div class="ln" style="top:104.0px"><span class="n">98</span><span class="c"></span></div>
<div class="ln" style="top:126.8px"><span class="n">99</span><span class="c">      MapOsmService.clear<span class="b2">()</span>;</span></div>
<div class="ln" style="top:149.6px"><span class="n">100</span><span class="c">      MapOsmService.onEnteredIntoNowMode<span class="b2">()</span>;</span></div>
<div class="ln" style="top:172.4px"><span class="n">101</span><span class="c"></span></div>
<div class="ln" style="top:195.2px"><span class="n cur">102</span><span class="c">      refresher</span></div>
<div class="ln" style="top:218.0px"><span class="n">103</span><span class="c">        .init<span class="b2">(</span><span class="b3">{</span></span></div>
<div class="ln" style="top:240.8px"><span class="n">104</span><span class="c">          onStart: <span class="k">function</span> <span class="b1">()</span> <span class="b1">{</span></span></div>
<div class="ln" style="top:263.6px"><span class="n">105</span><span class="c">            MapOsmService.clear<span class="b2">()</span>;</span></div>
<div class="ln" style="top:286.4px"><span class="n">106</span><span class="c">          <span class="b1">}</span>,</span></div>
<div class="ln" style="top:309.2px"><span class="n">107</span><span class="c">          onInterval: <span class="k">function</span> <span class="b1">()</span> <span class="b1">{</span></span></div>
<div class="ln" style="top:332.0px"><span class="n">108</span><span class="c">            BackendApi.getCarNow<span class="b2">(</span>self.car.id<span class="b2">)</span></span></div>
<div class="ln" style="top:354.8px"><span class="n">109</span><span class="c">              .then<span class="b2">(</span><span class="k">function</span> <span class="b3">(</span>data<span class="b3">)</span> <span class="b3">{</span></span></div>
<div class="ln" style="top:377.6px"><span class="n">110</span><span class="c">                self.vehicles = angular.copy<span class="b1">(</span>data<span class="b1">)</span>;</span></div>
<div class="ln" style="top:400.4px"><span class="n">111</span><span class="c">                MapOsmService.appendMarker<span class="b1">(</span>self.vehicles<span class="b2">[</span><span class="nu">0</span><span class="b2">]</span><span class="b1">)</span>;</span></div>
<div class="ln" style="top:423.2px"><span class="n">112</span><span class="c">                FuelService.setFuel<span class="b1">(</span>data<span class="b2">[</span><span class="nu">0</span><span class="b2">]</span><span class="b1">)</span>;</span></div>
<div class="ln" style="top:446.0px"><span class="n">113</span><span class="c">              <span class="b3">}</span><span class="b2">)</span>;</span></div>
<div class="ln" style="top:468.8px"><span class="n">114</span><span class="c">          <span class="b1">}</span></span></div>
<div class="ln" style="top:491.6px"><span class="n">115</span><span class="c">        <span class="b3">}</span><span class="b2">)</span></span></div>
<div class="ln" style="top:514.4px"><span class="n">116</span><span class="c">        .start<span class="b2">()</span>;</span></div>
<div class="ln" style="top:537.2px"><span class="n">117</span><span class="c"></span></div>
<div class="ln" style="top:560.0px"><span class="n">118</span><span class="c">      FuelService.getFuel<span class="b2">(</span>car.id<span class="b2">)</span></span></div>
<div class="ln" style="top:582.8px"><span class="n">119</span><span class="c">        .then<span class="b2">(</span><span class="k">function</span> <span class="b3">(</span>result<span class="b3">)</span> <span class="b3">{</span></span></div>
<div class="ln" style="top:605.6px"><span class="n">120</span><span class="c">          self.isShowFuel = result;</span></div>
<div class="ln" style="top:628.4px"><span class="n">121</span><span class="c">        <span class="b3">}</span><span class="b2">)</span>;</span></div>
<div class="ln" style="top:651.2px"><span class="n">122</span><span class="c">    <span class="b1">}</span>;</span></div>
<div class="ln" style="top:674.0px"><span class="n">123</span><span class="c"></span></div>
<div class="ln" style="top:696.8px"><span class="n">124</span><span class="c">    <span class="k">this</span>.$onDestroy = <span class="k">function</span> <span class="b1">()</span> <span class="b1">{</span></span></div>
<div class="ln" style="top:719.6px"><span class="n">125</span><span class="c">      refresher.stop<span class="b2">()</span>;</span></div>
<div class="ln" style="top:742.4px"><span class="n">126</span><span class="c">      MapOsmService.onExitedFromNowMode<span class="b2">()</span>;</span></div>
<div class="ln" style="top:765.2px"><span class="n">127</span><span class="c">    <span class="b1">}</span>;</span></div>
<div class="ln" style="top:788.0px"><span class="n">128</span><span class="c"></span></div>
<div class="ln" style="top:810.8px"><span class="n">129</span><span class="c">    <span class="k">this</span>.onSaveOutput = <span class="k">function</span> <span class="b1">()</span> <span class="b1">{</span></span></div>
<div class="ln" style="top:833.6px"><span class="n">130</span><span class="c">      countDownOutputsTimer<span class="b2">(</span><span class="nu">0</span><span class="b2">)</span>;</span></div>
<div class="ln" style="top:856.4px"><span class="n">131</span><span class="c">      BackendApi.setOutputState<span class="b2">(</span>_.extend<span class="b3">(</span><span class="b1">{</span>state: +!!<span class="k">this</span>.isOutput<span class="b1">}</span>, car<span class="b3">)</span><span class="b2">)</span></span></div>
<div class="ln" style="top:879.2px"><span class="n">132</span><span class="c">        .then<span class="b2">(</span><span class="k">function</span> <span class="b3">()</span> <span class="b3">{</span></span></div>
<div class="ln" style="top:902.0px"><span class="n">133</span><span class="c">          showToastSuccess<span class="b1">()</span>;</span></div>
<div class="ln" style="top:924.8px"><span class="n">134</span><span class="c">        <span class="b3">}</span><span class="b2">)</span></span></div>
<svg class="abs" style="left:87.39999999999998px;top:196.2px" width="14" height="16.4" viewBox="0 0 15 18" ><path d="M7.5 1C4.2 1 2 3.4 2 6.2c0 1.9 1 3 1.9 4 .6.7 1 1.4 1 2.3h5.2c0-.9.4-1.6 1-2.3.9-1 1.9-2.1 1.9-4C13 3.4 10.8 1 7.5 1z" fill="#ffcc00"/><path d="M5 13.6h5v1.2H5zM5.4 15.6h4.2v1.4H5.4z" fill="#ffcc00"/></svg>
<div class="abs" style="left:6.2px;top:383.9px;width:10px;height:10px;border-radius:5px;background:#8a8a8a"></div>
<div class="abs" style="left:0;top:0;width:1860px;height:68.4px;background:#1e1e1e;box-shadow:0 3px 3px rgba(0,0,0,0.85)">
<div class="ln" style="top:0.0px"><span class="n">1</span><span class="c"><span class="b1">(</span><span class="k">function</span> <span class="b2">()</span> <span class="b2">{</span></span></div>
<div class="ln" style="top:22.8px"><span class="n">32</span><span class="c">  <span class="k">function</span> VehiclesSettingsCtrl<span class="b3">(</span>$scope, $timeout, $filter, $mdToast, $localStorage,</span></div>
<div class="ln" style="top:45.6px"><span class="n">47</span><span class="c">    <span class="k">this</span>.$onInit = <span class="k">function</span> <span class="b1">()</span> <span class="b1">{</span></span></div>
</div>
<svg class="abs" style="left:278px;top:220.6px" width="14" height="22" viewBox="0 0 14 22" ><path d="M1 1V17.5L5 13.8L7.6 20L10 19L7.4 13H12.6z" fill="#1e1e1e" stroke="#e8e8e8" stroke-width="1.1" stroke-linejoin="round"/></svg>
</div>
<div class="abs" style="left:1860px;top:68.4px;width:135px;height:945.6px;background:#1e1e1e">
<svg class="abs" style="left:0;top:0" width="135" height="946" viewBox="0 0 135 946">
<path d="M11 0h8.6M13 66h7.6M15 74h3.6M15 78h2.6M26 78h3.6M26 82h2.6M15 92h3.6M15 96h3.6M29 96h7.6M17 98h3.6M43 98h3.6M17 100h3.6M19 102h3.6M17 106h3.6M47 106h3.6M79 106h3.6M17 108h3.6M43 108h3.6M71 108h3.6M17 110h3.6M43 110h3.6M69 110h3.6M17 112h3.6M53 112h3.6M120 112h5.6M30 118h4.6M38 120h7.6M52 120h8.6M17 126h3.6M43 126h3.6M17 128h3.6M39 128h3.6M17 130h3.6M41 130h3.6M17 132h3.6M45 132h3.6M17 134h3.6M44 134h3.6M17 136h3.6M48 136h3.6M17 138h3.6M42 138h3.6M17 140h3.6M41 140h3.6M17 142h3.6M52 142h3.6M17 146h3.6M17 148h3.6M17 150h3.6M17 204h3.6M17 214h8.6M31 218h7.6M34 224h7.6M32 228h7.6M26 248h7.6M15 258h3.6M33 258h7.6M15 268h3.6M36 268h7.6M52 272h3.6M26 274h7.6M15 286h3.6M41 286h7.6M17 288h3.6M41 288h3.6M15 296h3.6M33 296h7.6M17 298h2.6M17 300h1.6M17 308h1.6M63 316h3.6M26 318h7.6M15 328h3.6M41 328h7.6M50 332h3.6M26 334h7.6M15 344h3.6M45 344h7.6M59 346h3.6M26 348h7.6M15 358h3.6M37 358h7.6M64 360h3.6M26 362h7.6M15 372h3.6M41 372h7.6M50 374h3.6M26 376h7.6M15 386h3.6M39 386h7.6M50 392h3.6M26 394h7.6M15 404h3.6M39 404h7.6M66 410h3.6M26 412h7.6M15 422h3.6M35 422h7.6M66 426h3.6M26 428h7.6M15 438h3.6M41 438h7.6M17 440h1.6M17 442h1.6M17 444h1.6M17 446h1.6M26 452h7.6M15 460h3.6M41 460h7.6M66 462h3.6M26 464h7.6M15 474h3.6M35 474h7.6M60 476h3.6M26 478h7.6M15 490h3.6M37 490h7.6M26 498h7.6M15 510h3.6M39 510h7.6M26 518h7.6M15 530h3.6M37 530h7.6M26 538h7.6M15 548h3.6M39 548h7.6M55 550h3.6M26 552h7.6M15 562h3.6M49 562h7.6M61 570h3.6M26 572h7.6M15 582h3.6M37 582h7.6M57 590h3.6M26 592h7.6M15 602h3.6M41 602h7.6M17 604h1.6M17 612h3.6M52 616h3.6M15 624h3.6M37 624h7.6M17 626h1.6M28 630h7.6M44 632h3.6M17 638h3.6M36 640h3.6M15 646h3.6M33 646h7.6M38 648h3.6M31 654h7.6M34 660h7.6M32 664h7.6M27 666h1.6M50 672h4.6M52 674h4.6M42 676h4.6M15 692h3.6M29 692h7.6M38 694h3.6M26 702h7.6M42 704h4.6M15 712h7.6M55 714h7.6M15 722h7.6M17 726h1.6M40 728h4.6M19 732h5.6M42 740h7.6" stroke="#3b6d9e" stroke-width="1.25" fill="none"/>
<path d="M21 0h4.6M13 6h6.6M15 8h5.6M15 10h8.6M42 10h2.6M17 12h8.6M19 14h7.6M19 16h5.6M19 18h4.6M24 18h11.6M17 20h1.6M17 22h11.6M17 24h10.6M29 24h9.6M39 24h9.6M17 26h8.6M26 26h3.6M15 28h2.6M13 32h10.6M24 32h10.6M35 32h4.6M41 32h3.6M13 62h1.6M22 66h6.6M29 66h4.6M34 66h7.6M42 66h5.6M49 66h8.6M59 66h7.6M68 66h8.6M78 66h11.6M15 68h10.6M27 68h8.6M37 68h10.6M49 68h8.6M59 68h10.6M70 68h7.6M79 68h11.6M15 70h8.6M24 70h4.6M30 70h7.6M20 74h8.6M30 74h10.6M41 74h10.6M19 78h5.6M17 80h7.6M26 80h5.6M33 80h5.6M40 80h4.6M46 80h5.6M17 82h7.6M30 82h7.6M38 82h11.6M17 84h4.6M22 84h8.6M17 86h4.6M22 86h8.6M15 88h0.6M15 90h5.6M21 90h8.6M30 90h6.6M20 92h5.6M27 92h3.6M20 96h7.6M38 96h4.6M22 98h10.6M33 98h4.6M39 98h2.6M48 98h9.6M58 98h7.6M22 100h3.6M26 100h4.6M31 100h10.6M24 102h8.6M33 102h8.6M42 102h3.6M19 104h8.6M28 104h10.6M39 104h6.6M47 104h10.6M58 104h4.6M63 104h4.6M68 104h7.6M76 104h6.6M22 106h10.6M33 106h4.6M38 106h7.6M52 106h3.6M56 106h7.6M64 106h10.6M75 106h2.6M22 108h7.6M30 108h11.6M48 108h9.6M58 108h11.6M22 110h8.6M31 110h10.6M48 110h3.6M52 110h10.6M63 110h4.6M22 112h8.6M31 112h5.6M37 112h4.6M42 112h9.6M58 112h10.6M69 112h3.6M73 112h6.6M80 112h7.6M19 114h5.6M21 116h5.6M21 118h7.6M21 120h8.6M31 120h5.6M47 120h3.6M19 122h1.6M17 124h1.6M22 126h9.6M32 126h9.6M48 126h9.6M58 126h9.6M22 128h10.6M33 128h4.6M44 128h4.6M49 128h10.6M22 130h5.6M28 130h11.6M46 130h10.6M57 130h6.6M22 132h9.6M32 132h11.6M50 132h7.6M58 132h5.6M64 132h7.6M22 134h9.6M32 134h10.6M49 134h7.6M57 134h9.6M67 134h2.6M22 136h8.6M31 136h9.6M41 136h5.6M53 136h6.6M60 136h5.6M66 136h11.6M22 138h4.6M27 138h5.6M33 138h7.6M47 138h5.6M53 138h6.6M60 138h5.6M22 140h6.6M29 140h10.6M46 140h3.6M50 140h10.6M61 140h2.6M22 142h5.6M28 142h7.6M36 142h7.6M44 142h6.6M57 142h3.6M61 142h5.6M67 142h9.6M77 142h8.6M22 146h9.6M33 146h11.6M22 148h8.6M31 148h8.6M40 148h11.6M22 150h3.6M19 152h4.6M21 154h1.6M23 156h2.6M23 158h4.6M21 160h1.6M21 162h1.6M23 164h2.6M23 166h4.6M21 168h1.6M21 170h1.6M23 172h2.6M23 174h4.6M21 176h1.6M19 178h1.6M19 180h7.6M21 182h1.6M23 184h2.6M23 186h4.6M21 188h1.6M21 190h1.6M23 192h2.6M23 194h4.6M21 196h1.6M19 198h1.6M17 200h1.6M17 202h9.6M28 202h9.6M38 202h7.6M22 204h9.6M32 204h9.6M42 204h3.6M17 208h4.6M22 208h10.6M33 208h5.6M17 210h9.6M27 210h3.6M31 210h6.6M38 210h4.6M43 210h9.6M19 216h6.6M21 218h8.6M40 218h4.6M23 220h6.6M30 220h10.6M41 220h3.6M21 222h1.6M21 224h11.6M43 224h4.6M23 226h5.6M29 226h4.6M34 226h8.6M43 226h3.6M47 226h8.6M25 228h5.6M41 228h8.6M27 230h4.6M32 230h3.6M36 230h5.6M42 230h4.6M47 230h8.6M56 230h6.6M27 232h3.6M31 232h4.6M36 232h6.6M43 232h9.6M53 232h5.6M59 232h7.6M67 232h4.6M27 234h8.6M36 234h8.6M45 234h10.6M25 236h2.6M21 238h0.6M19 240h1.6M19 242h8.6M17 246h10.6M28 246h4.6M33 246h10.6M19 248h5.6M35 248h10.6M21 250h4.6M26 250h10.6M37 250h8.6M19 252h2.6M15 254h1.6M20 258h11.6M42 258h4.6M17 260h10.6M28 260h5.6M17 262h10.6M28 262h10.6M39 262h7.6M47 262h5.6M15 264h1.6M20 268h4.6M25 268h9.6M45 268h4.6M17 270h5.6M23 270h4.6M28 270h8.6M37 270h3.6M17 272h7.6M25 272h10.6M36 272h5.6M42 272h8.6M57 272h3.6M61 272h6.6M68 272h8.6M78 272h3.6M19 274h5.6M35 274h4.6M21 276h8.6M30 276h9.6M19 278h1.6M15 280h1.6M20 286h5.6M26 286h3.6M30 286h9.6M50 286h4.6M22 288h7.6M30 288h9.6M17 290h4.6M22 290h7.6M30 290h8.6M39 290h3.6M15 292h1.6M20 296h11.6M42 296h4.6M21 298h5.6M27 298h8.6M36 298h4.6M20 300h6.6M27 300h6.6M19 302h8.6M28 302h6.6M35 302h6.6M42 302h6.6M19 304h6.6M26 304h9.6M36 304h6.6M43 304h5.6M17 306h0.6M20 308h6.6M27 308h6.6M19 310h10.6M30 310h8.6M39 310h9.6M19 312h3.6M23 312h3.6M27 312h7.6M35 312h10.6M46 312h2.6M17 314h0.6M17 316h7.6M25 316h6.6M32 316h8.6M42 316h8.6M51 316h10.6M68 316h10.6M79 316h4.6M85 316h3.6M19 318h5.6M35 318h4.6M21 320h8.6M30 320h9.6M19 322h1.6M15 324h1.6M20 328h8.6M29 328h10.6M50 328h4.6M17 330h4.6M22 330h9.6M17 332h6.6M24 332h4.6M29 332h6.6M36 332h10.6M47 332h1.6M55 332h6.6M62 332h8.6M71 332h5.6M78 332h3.6M19 334h5.6M35 334h4.6M21 336h6.6M28 336h11.6M19 338h1.6M15 340h1.6M20 344h10.6M31 344h3.6M35 344h8.6M54 344h4.6M17 346h10.6M28 346h8.6M37 346h4.6M42 346h4.6M47 346h10.6M64 346h9.6M74 346h6.6M81 346h5.6M88 346h3.6M19 348h5.6M35 348h4.6M21 350h10.6M32 350h7.6M19 352h1.6M15 354h1.6M20 358h5.6M26 358h9.6M46 358h4.6M17 360h9.6M27 360h8.6M36 360h4.6M41 360h9.6M51 360h11.6M69 360h10.6M80 360h5.6M87 360h3.6M19 362h5.6M35 362h4.6M21 364h9.6M31 364h8.6M19 366h1.6M15 368h1.6M20 372h4.6M25 372h5.6M31 372h8.6M50 372h4.6M17 374h5.6M23 374h5.6M29 374h3.6M33 374h5.6M39 374h9.6M55 374h10.6M66 374h8.6M76 374h3.6M19 376h5.6M35 376h4.6M21 378h5.6M27 378h10.6M38 378h1.6M19 380h1.6M15 382h1.6M20 386h8.6M29 386h8.6M48 386h4.6M17 388h5.6M23 388h9.6M17 390h5.6M23 390h3.6M27 390h10.6M17 392h3.6M21 392h4.6M26 392h5.6M32 392h9.6M42 392h6.6M55 392h6.6M62 392h6.6M69 392h7.6M78 392h3.6M19 394h5.6M35 394h4.6M21 396h3.6M25 396h7.6M33 396h6.6M19 398h1.6M15 400h1.6M20 404h6.6M27 404h10.6M48 404h4.6M17 406h7.6M25 406h6.6M17 408h6.6M24 408h8.6M33 408h7.6M41 408h9.6M51 408h5.6M17 410h5.6M23 410h3.6M27 410h8.6M36 410h10.6M47 410h9.6M57 410h7.6M71 410h5.6M77 410h8.6M87 410h3.6M19 412h5.6M35 412h4.6M21 414h5.6M27 414h3.6M31 414h8.6M19 416h1.6M15 418h1.6M20 422h10.6M31 422h2.6M44 422h4.6M17 424h5.6M23 424h3.6M27 424h5.6M33 424h5.6M39 424h11.6M17 426h5.6M23 426h10.6M34 426h4.6M39 426h3.6M43 426h8.6M52 426h10.6M63 426h1.6M71 426h4.6M76 426h8.6M86 426h3.6M19 428h5.6M35 428h4.6M21 430h3.6M25 430h6.6M32 430h7.6M19 432h1.6M15 434h1.6M20 438h6.6M27 438h7.6M35 438h4.6M50 438h4.6M20 440h9.6M20 442h3.6M24 442h4.6M29 442h10.6M40 442h1.6M20 444h3.6M24 444h4.6M29 444h10.6M40 444h5.6M20 446h8.6M29 446h6.6M36 446h5.6M17 450h7.6M25 450h10.6M36 450h10.6M47 450h6.6M54 450h6.6M19 452h5.6M35 452h4.6M21 454h7.6M29 454h10.6M15 456h1.6M20 460h6.6M27 460h10.6M38 460h1.6M50 460h4.6M17 462h5.6M23 462h9.6M33 462h4.6M38 462h9.6M48 462h10.6M59 462h5.6M71 462h8.6M80 462h4.6M85 462h8.6M95 462h3.6M19 464h5.6M35 464h4.6M21 466h6.6M28 466h11.6M19 468h1.6M15 470h1.6M20 474h9.6M30 474h3.6M44 474h4.6M17 476h4.6M22 476h6.6M29 476h7.6M37 476h4.6M42 476h5.6M48 476h10.6M65 476h8.6M74 476h4.6M80 476h3.6M19 478h5.6M35 478h4.6M21 480h5.6M27 480h7.6M35 480h4.6M19 482h1.6M15 484h1.6M20 490h5.6M26 490h9.6M46 490h6.6M17 492h10.6M28 492h6.6M35 492h4.6M40 492h10.6M19 494h7.6M19 498h5.6M35 498h4.6M21 500h5.6M27 500h6.6M34 500h5.6M40 500h6.6M21 502h11.6M19 504h1.6M15 506h1.6M20 510h9.6M30 510h7.6M48 510h6.6M17 512h9.6M27 512h8.6M36 512h9.6M46 512h4.6M19 514h7.6M19 518h5.6M35 518h4.6M21 520h4.6M26 520h8.6M35 520h11.6M21 522h11.6M19 524h1.6M15 526h1.6M20 530h3.6M24 530h11.6M46 530h6.6M17 532h8.6M26 532h10.6M37 532h10.6M48 532h2.6M19 534h7.6M19 538h5.6M35 538h4.6M21 540h7.6M29 540h4.6M34 540h4.6M39 540h7.6M21 542h11.6M19 544h1.6M15 546h1.6M20 548h6.6M27 548h10.6M48 548h4.6M17 550h4.6M22 550h4.6M27 550h7.6M35 550h7.6M43 550h10.6M60 550h3.6M64 550h9.6M75 550h3.6M19 552h5.6M35 552h4.6M21 554h5.6M27 554h7.6M35 554h4.6M19 556h1.6M15 558h1.6M20 562h5.6M26 562h9.6M36 562h11.6M58 562h4.6M17 564h7.6M25 564h9.6M35 564h5.6M41 564h6.6M17 566h10.6M28 566h6.6M17 568h8.6M26 568h4.6M31 568h8.6M17 570h7.6M25 570h3.6M29 570h5.6M35 570h9.6M45 570h4.6M50 570h9.6M66 570h7.6M74 570h7.6M83 570h3.6M19 572h5.6M35 572h4.6M21 574h3.6M25 574h4.6M30 574h9.6M19 576h1.6M15 578h1.6M20 582h7.6M28 582h7.6M46 582h4.6M17 584h4.6M22 584h6.6M29 584h4.6M34 584h7.6M42 584h5.6M17 586h4.6M22 586h11.6M17 588h10.6M28 588h3.6M32 588h8.6M41 588h7.6M17 590h9.6M27 590h7.6M35 590h5.6M41 590h3.6M45 590h10.6M62 590h6.6M69 590h4.6M74 590h9.6M85 590h3.6M19 592h5.6M35 592h4.6M21 594h5.6M27 594h7.6M35 594h4.6M19 596h1.6M15 598h1.6M20 602h3.6M24 602h5.6M30 602h9.6M50 602h4.6M20 604h6.6M27 604h7.6M35 604h7.6M43 604h6.6M19 606h6.6M26 606h7.6M34 606h10.6M45 606h1.6M17 608h0.6M17 610h5.6M23 610h7.6M31 610h8.6M40 610h3.6M44 610h7.6M52 610h4.6M22 612h3.6M26 612h3.6M30 612h3.6M34 612h6.6M41 612h10.6M52 612h5.6M17 614h0.6M17 616h6.6M24 616h10.6M35 616h4.6M40 616h10.6M17 618h0.6M17 620h9.6M27 620h10.6M38 620h9.6M48 620h7.6M56 620h6.6M63 620h6.6M70 620h6.6M20 624h8.6M29 624h6.6M46 624h4.6M20 626h9.6M19 628h6.6M26 628h5.6M32 628h9.6M42 628h6.6M21 630h5.6M37 630h4.6M23 632h8.6M32 632h10.6M21 634h1.6M17 636h0.6M17 640h3.6M21 640h5.6M27 640h7.6M15 642h1.6M20 646h11.6M42 646h4.6M17 648h3.6M21 648h4.6M26 648h10.6M17 650h8.6M19 652h6.6M21 654h8.6M40 654h4.6M23 656h7.6M31 656h9.6M41 656h5.6M47 656h3.6M51 656h4.6M56 656h9.6M66 656h6.6M21 658h1.6M21 660h11.6M43 660h4.6M23 662h7.6M31 662h6.6M38 662h7.6M46 662h3.6M50 662h8.6M25 664h5.6M41 664h8.6M30 666h9.6M29 668h7.6M29 670h9.6M29 672h10.6M40 672h8.6M29 674h5.6M35 674h5.6M41 674h9.6M29 676h11.6M27 678h0.6M25 680h2.6M21 682h0.6M19 684h1.6M19 686h8.6M15 688h1.6M20 692h7.6M38 692h8.6M17 694h7.6M25 694h11.6M17 696h10.6M28 696h4.6M19 698h4.6M19 700h7.6M19 702h5.6M35 702h7.6M21 704h3.6M25 704h7.6M33 704h7.6M19 706h1.6M15 708h1.6M24 712h8.6M33 712h8.6M42 712h9.6M17 714h8.6M26 714h8.6M36 714h6.6M43 714h10.6M64 714h9.6M100 714h9.6M17 716h6.6M24 716h8.6M33 716h5.6M15 718h0.6M24 722h5.6M30 722h3.6M34 722h8.6M43 722h10.6M17 724h9.6M27 724h4.6M32 724h10.6M43 724h7.6M51 724h6.6M58 724h6.6M20 726h7.6M19 728h6.6M26 728h3.6M30 728h8.6M19 730h4.6M24 730h7.6M32 730h4.6M38 730h9.6M17 734h0.6M17 736h4.6M22 736h10.6M17 738h0.6M17 740h5.6M23 740h9.6M33 740h7.6M51 740h3.6M55 740h9.6M65 740h3.6M69 740h11.6M13 746h0.6M11 748h4.6" stroke="#666666" stroke-width="1.25" fill="none"/>
<path d="M13 2h11.6M22 8h11.6M25 10h5.6M31 10h9.6M26 16h2.6M37 18h2.6M30 22h6.6M37 22h8.6M46 22h4.6M51 22h4.6M56 22h3.6M60 22h6.6M67 22h10.6M78 22h3.6M31 26h3.6M15 34h7.6M15 36h6.6M15 38h7.6M15 40h8.6M15 42h11.6M15 44h8.6M15 46h9.6M15 48h10.6M15 50h8.6M24 50h4.6M15 52h7.6M23 52h4.6M15 54h6.6M22 54h8.6M15 56h11.6M15 58h5.6M21 58h7.6M15 60h6.6M32 86h9.6M42 86h3.6M38 90h5.6M44 90h7.6M67 98h9.6M29 158h11.6M29 166h5.6M35 166h7.6M29 174h3.6M33 174h11.6M29 186h10.6M40 186h4.6M29 194h9.6M39 194h3.6M47 202h9.6M28 494h7.6M37 494h9.6M47 494h10.6M58 494h8.6M28 514h7.6M37 514h6.6M44 514h8.6M53 514h8.6M62 514h4.6M28 534h7.6M37 534h3.6M41 534h9.6M51 534h8.6M60 534h6.6M75 714h3.6M79 714h7.6M87 714h11.6M111 714h1.6M34 736h5.6" stroke="#8f654d" stroke-width="1.25" fill="none"/>
<path d="M89 112h7.6M97 112h5.6M103 112h6.6M110 112h8.6M69 126h4.6M61 128h4.6M65 130h4.6M73 132h4.6M71 134h4.6M79 136h4.6M67 138h4.6M65 140h4.6M87 142h4.6M50 302h1.6M50 304h1.6M50 310h1.6M50 312h1.6M43 442h4.6M47 444h4.6M43 446h4.6M82 740h4.6" stroke="#75906e" stroke-width="1.25" fill="none"/>
</svg>
<div class="abs" style="left:120px;top:0;width:15px;height:946px;background:#202020;border-left:1px solid #2e2e2e"></div>
<div class="abs" style="left:120px;top:213px;width:15px;height:95px;background:#424242"></div>
<div class="abs" style="left:120px;top:230px;width:15px;height:2px;background:#6b6b6b"></div>
</div>
</div>
<div id="panel" class="abs">
<div class="ptab" style="left:0;width:600px"><span class="t" style="left:24.0px;font-size:13.2px;transform:scaleX(0.882);">PROBLEMS</span></div>
<div class="ptab" style="left:0;width:600px"><span class="t" style="left:117.0px;font-size:13.2px;transform:scaleX(0.919);">OUTPUT</span></div>
<div class="ptab active" style="left:0;width:600px"><span class="t" style="left:195.0px;font-size:13.2px;transform:scaleX(0.894);">TERMINAL</span></div>
<div class="ptab" style="left:0;width:600px"><span class="t" style="left:285.0px;font-size:13.2px;transform:scaleX(0.875);">DEBUG CONSOLE</span></div>
<div class="ptab" style="left:0;width:600px"><span class="t" style="left:416.0px;font-size:13.2px;transform:scaleX(0.864);">PORTS</span></div>
<div class="abs" style="left:192.5px;top:32.59999999999991px;width:66.5px;height:1.2px;background:#e7e7e7"></div>
<div class="abs code" style="left:24px;top:49px;height:22.8px;line-height:23.4px;color:#cccccc;letter-spacing:-0.08px">admin@localhost:~/AngularProjects/TransGPS/trans-gps-dev&gt;</div>
<div class="abs" style="left:8.399999999999977px;top:53.59999999999991px;width:10.4px;height:10.4px;border-radius:5.2px;border:1.6px solid #858585"></div>
<svg class="abs" style="left:1735px;top:10.700000000000045px" width="19.2" height="19.2" viewBox="0 0 16 16" ><path d="M8 1L14 4.500V11.500L8 15L2 11.500V4.500z" fill="none" stroke="#c5a76b" stroke-width="0.8" /><path d="M8.400 9.600L13.400 6.800V11.200L8.400 14z" fill="#cccccc"/></svg><div class="abs" style="left:1758px;top:7.4px;height:26px;line-height:26px;font-size:13.400px;color:#cccccc">bash</div><svg class="abs" style="left:1796px;top:10.700000000000045px" width="19.2" height="19.2" viewBox="0 0 16 16" ><path d="M8 1.500V14.500M1.500 8H14.500" fill="none" stroke="#cccccc" stroke-width="1.05" /></svg><svg class="abs" style="left:1818px;top:13.700000000000045px" width="12" height="12" viewBox="0 0 16 16" ><path d="M2.500 5.500L8 11L13.500 5.500" fill="none" stroke="#cccccc" stroke-width="1.5" /></svg><svg class="abs" style="left:1841px;top:10.700000000000045px" width="19.2" height="19.2" viewBox="0 0 16 16" ><path d="M2.500 2.500h11a1 1 0 0 1 1 1v9a1 1 0 0 1-1 1h-11a1 1 0 0 1-1-1v-9a1 1 0 0 1 1-1zM8 2.500v11" fill="none" stroke="#cccccc" stroke-width="1" /></svg><svg class="abs" style="left:1869px;top:9.700000000000045px" width="19.2" height="19.2" viewBox="0 0 16 16" ><path d="M2.500 4h11M6 4V2.200h4V4M3.800 4.200L4.500 14.500h7L12.200 4.200M6.500 6.500v6M8 6.500v6M9.500 6.500v6" fill="none" stroke="#cccccc" stroke-width="1" /></svg><svg class="abs" style="left:1898px;top:10.700000000000045px" width="19.2" height="19.2" viewBox="0 0 16 16" ><circle cx="3.2" cy="8" r="1.05" fill="#cccccc"/><circle cx="8" cy="8" r="1.05" fill="#cccccc"/><circle cx="12.8" cy="8" r="1.05" fill="#cccccc"/></svg><svg class="abs" style="left:1928px;top:10.700000000000045px" width="19.2" height="19.2" viewBox="0 0 16 16" ><path d="M3.200 10.300L7.900 5.600L12.600 10.300" fill="none" stroke="#cccccc" stroke-width="1.05" /></svg><svg class="abs" style="left:1959px;top:10.700000000000045px" width="19.2" height="19.2" viewBox="0 0 16 16" ><path d="M3.8 3.8L12.2 12.2M12.2 3.8L3.8 12.2" fill="none" stroke="#cccccc" stroke-width="1.15" /></svg>
<div class="abs" style="left:1980px;top:49px;width:1px;height:308px;background:#3a3a3a"></div>
<div class="abs" style="left:1981px;top:48.5px;width:5px;height:7px;background:#6e6e6e"></div>
</div>
<div id="status" class="abs">
<div class="abs" style="left:0;top:0;width:40px;height:26px;background:#16825d"></div>
<svg class="abs" style="left:12px;top:6px" width="16" height="14" viewBox="0 0 16 14" ><path d="M1.500 3L6.500 7.500L1.500 12M14 1L10 4.500L14 8" fill="none" stroke="#ffffff" stroke-width="1.2" /></svg>
<svg class="abs" style="left:48px;top:5px" width="16.8" height="16.8" viewBox="0 0 16 16" ><path d="M4.500 1.500a1.800 1.800 0 1 1 0 3.600a1.800 1.800 0 0 1 0-3.600zM4.500 11a1.800 1.800 0 1 1 0 3.600a1.800 1.800 0 0 1 0-3.600zM11.500 3.500a1.800 1.800 0 1 1 0 3.600a1.800 1.800 0 0 1 0-3.600zM4.500 5.100V11M11.500 7.100C11.500 9.500 7 9 4.500 10.500" fill="none" stroke="#ffffff" stroke-width="1.1" /></svg>
<span class="t" style="left:67.0px;font-size:14.4px;transform:scaleX(1.018);">CarIcon*</span>
<svg class="abs" style="left:131px;top:5px" width="16.8" height="16.8" viewBox="0 0 16 16" ><path d="M2.500 7.500a5.500 5.500 0 0 1 10-2.800M13.500 8.500a5.500 5.500 0 0 1-10 2.800M12.800 1.500V5h-3.500M3.200 14.500V11h3.500" fill="none" stroke="#ffffff" stroke-width="1.1" /></svg>
<svg class="abs" style="left:165px;top:5px" width="16.8" height="16.8" viewBox="0 0 16 16" ><path d="M8 1.500a6.500 6.500 0 1 1 0 13a6.500 6.500 0 0 1 0-13zM5.500 5.500L10.500 10.500M10.500 5.500L5.500 10.500" fill="none" stroke="#ffffff" stroke-width="1.1" /></svg>
<span class="t" style="left:185.0px;font-size:14.4px;transform:scaleX(0.939);">0</span>
<svg class="abs" style="left:198px;top:5px" width="16.8" height="16.8" viewBox="0 0 16 16" ><path d="M8 1.800L14.800 14H1.200zM8 6v4.500M8 11.500v1.300" fill="none" stroke="#ffffff" stroke-width="1.1" stroke-linejoin="round"/></svg>
<span class="t" style="left:217.0px;font-size:14.4px;transform:scaleX(0.939);">0</span>
<svg class="abs" style="left:1768px;top:5px" width="16.8" height="16.8" viewBox="0 0 16 16" ><path d="M8 5a3 3 0 1 1 0 6a3 3 0 0 1 0-6zM8 0.500V5M8 11V15.500" fill="none" stroke="#ffffff" stroke-width="1.2" /></svg>
<span class="t" style="left:1788.0px;font-size:14.4px;transform:scaleX(1.009);">Admin (1 month ago)</span>
<span class="t" style="left:1942.0px;font-size:14.4px;transform:scaleX(0.959);">Ln 102, Col 16 (10 selected)</span>
<span class="t" style="left:2133.0px;font-size:14.4px;transform:scaleX(0.916);">Spaces: 2</span>
<span class="t" style="left:2211.4px;font-size:14.4px;transform:scaleX(0.907);">UTF-8</span>
<span class="t" style="left:2267.4px;font-size:14.4px;transform:scaleX(0.857);">LF</span>
<span class="t" style="left:2299.6px;font-size:13px;letter-spacing:2.4px;top:-1px">{}</span>
<span class="t" style="left:2322.0px;font-size:14.4px;transform:scaleX(0.938);">JavaScript</span>
<svg class="abs" style="left:2402px;top:5.2px" width="16.8" height="14.979310344827587" viewBox="0 0 20.3 18.1" opacity="0.95"><ellipse cx="6.250" cy="5.150" rx="3.100" ry="3.600" fill="none" stroke="#ffffff" stroke-width="1.7"/><ellipse cx="14.050" cy="5.150" rx="3.100" ry="3.600" fill="none" stroke="#ffffff" stroke-width="1.7"/><path d="M3.200 8.200C1.600 8.800 0.950 10 0.950 11.600V12.600C0.950 14.200 4.800 17.150 10.150 17.150C15.500 17.150 19.350 14.200 19.350 12.600V11.600C19.350 10 18.700 8.800 17.100 8.200" fill="none" stroke="#ffffff" stroke-width="1.7"/><path d="M7.700 11V13.400M12.600 11V13.400" stroke="#ffffff" stroke-width="1.7" stroke-linecap="round"/></svg>
<svg class="abs" style="left:2438.6px;top:5px" width="16.8" height="16.8" viewBox="0 0 16 16" ><path d="M8 5.500a1.800 1.800 0 1 1 0 3.600a1.800 1.800 0 0 1 0-3.600zM8 9.100V15M4.600 10.800a4.800 4.800 0 1 1 6.800 0M2.600 12.400a7.200 7.200 0 1 1 10.800 0" fill="none" stroke="#ffffff" stroke-width="1.1" /></svg>
<span class="t" style="left:2458.0px;font-size:14.4px;transform:scaleX(0.947);">Go Live</span>
<svg class="abs" style="left:2524px;top:5px" width="16.8" height="16.8" viewBox="0 0 16 16" ><path d="M3 12.500h10L12 10.500V7a4 4 0 0 0-8 0V10.500zM6.500 13a1.500 1.500 0 0 0 3 0" fill="none" stroke="#ffffff" stroke-width="1.1" stroke-linejoin="round"/><circle cx="12.200" cy="3.200" r="2.600" fill="#ffffff"/></svg>
</div>
</body></html>
